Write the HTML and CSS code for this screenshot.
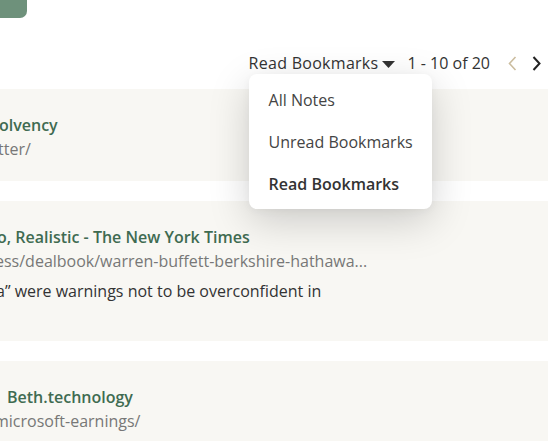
FILE: index.html
```html
<!DOCTYPE html>
<html lang="en">
<head>
<meta charset="utf-8">
<title>Bookmarks</title>
<link rel="stylesheet" href="styles.css">
</head>
<body>
<div class="page">
  <div class="topbar">
    <button class="new-btn" aria-label="New"></button>
  </div>

  <div class="toolbar">
    <div class="filter">
      <button class="filter-btn">
        <span>Read Bookmarks</span>
        <svg class="caret" width="13" height="7" viewBox="0 0 13 7"><polygon points="0,0 13,0 6.5,7" fill="#333"/></svg>
      </button>
      <div class="menu">
        <div class="menu-item">All Notes</div>
        <div class="menu-item">Unread Bookmarks</div>
        <div class="menu-item active">Read Bookmarks</div>
      </div>
    </div>
    <span class="count">1 - 10 of 20</span>
    <button class="pager" aria-label="Previous">
      <svg width="9" height="15" viewBox="0 0 9 15"><polyline points="7.5,1 1.5,7.5 7.5,14" fill="none" stroke="#cbbd9f" stroke-width="1.6"/></svg>
    </button>
    <button class="pager" aria-label="Next">
      <svg width="9" height="15" viewBox="0 0 9 15"><polyline points="1.5,1 7.5,7.5 1.5,14" fill="none" stroke="#222" stroke-width="2"/></svg>
    </button>
  </div>

  <div class="list">
    <div class="card">
      <div class="title in-1">olvency</div>
      <div class="url in-2">tter/</div>
    </div>
    <div class="card tall">
      <div class="title in-3">o, Realistic - The New York Times</div>
      <div class="url in-5">ess/dealbook/warren-buffett-berkshire-hathawa...</div>
      <div class="desc in-4">a” were warnings not to be overconfident in</div>
    </div>
    <div class="card">
      <div class="title pad-7">Beth.technology</div>
      <div class="url in-6">microsoft-earnings/</div>
    </div>
  </div>
</div>
</body>
</html>
```

FILE: styles.css
```css
* { box-sizing: border-box; }

html, body {
  margin: 0;
  padding: 0;
  background: #ffffff;
  overflow: hidden;
}

body {
  font-family: "Open Sans", "Noto Sans", sans-serif;
  font-size: 16px;
  color: #333;
}

.page {
  width: 549px;
  height: 441px;
  overflow: hidden;
  padding-right: 1px;
}

.topbar {
  height: 18px;
}

.new-btn {
  display: block;
  width: 27px;
  height: 18px;
  border: 0;
  padding: 0;
  background: #6e917b;
  border-radius: 0 0 7px 0;
}

.toolbar {
  display: flex;
  justify-content: flex-end;
  align-items: center;
  height: 24px;
  margin-top: 33px;
  margin-bottom: 14px;
}

.filter {
  position: relative;
}

.filter-btn {
  display: flex;
  align-items: center;
  gap: 4px;
  border: 0;
  padding: 0;
  background: none;
  font: inherit;
  font-weight: 500;
  letter-spacing: 0.28px;
  color: #333;
  line-height: 24px;
}

.caret {
  display: block;
  margin-top: 2px;
}

.menu {
  position: absolute;
  top: 23px;
  left: 0;
  width: 183px;
  padding: 5px 0 4px;
  background: #fff;
  border-radius: 8px;
  box-shadow: 0 12px 40px rgba(0, 0, 0, 0.18), 0 2px 8px rgba(0, 0, 0, 0.04);
  z-index: 10;
}

.menu-item {
  height: 42px;
  line-height: 42px;
  padding-left: 20px;
  color: #444;
  white-space: nowrap;
}

.menu-item.active {
  font-weight: 600;
  color: #333;
}

.count {
  margin-left: 12px;
  margin-right: 10px;
  color: #333;
  line-height: 24px;
}

.pager {
  width: 24px;
  height: 24px;
  border: 0;
  padding: 0;
  background: none;
  display: flex;
  align-items: center;
  justify-content: center;
}

.pager svg { display: block; }

.list {
  display: flex;
  flex-direction: column;
  gap: 20px;
}

.card {
  background: #f8f7f3;
  padding: 24px 0 20px;
  overflow: hidden;
  white-space: nowrap;
  line-height: 24px;
}

.card.tall {
  padding-bottom: 38px;
}

.title {
  font-weight: 600;
  color: #3f6b51;
}

.url {
  color: #777;
}

.desc {
  margin-top: 6px;
  color: #333;
}

.in-1 { text-indent: -1px; }
.in-2 { text-indent: -2px; }
.in-3 { text-indent: -3px; }
.in-4 { text-indent: -4px; }
.in-5 { text-indent: -5px; }
.in-6 { text-indent: -6px; }
.pad-7 { padding-left: 7px; }
```
